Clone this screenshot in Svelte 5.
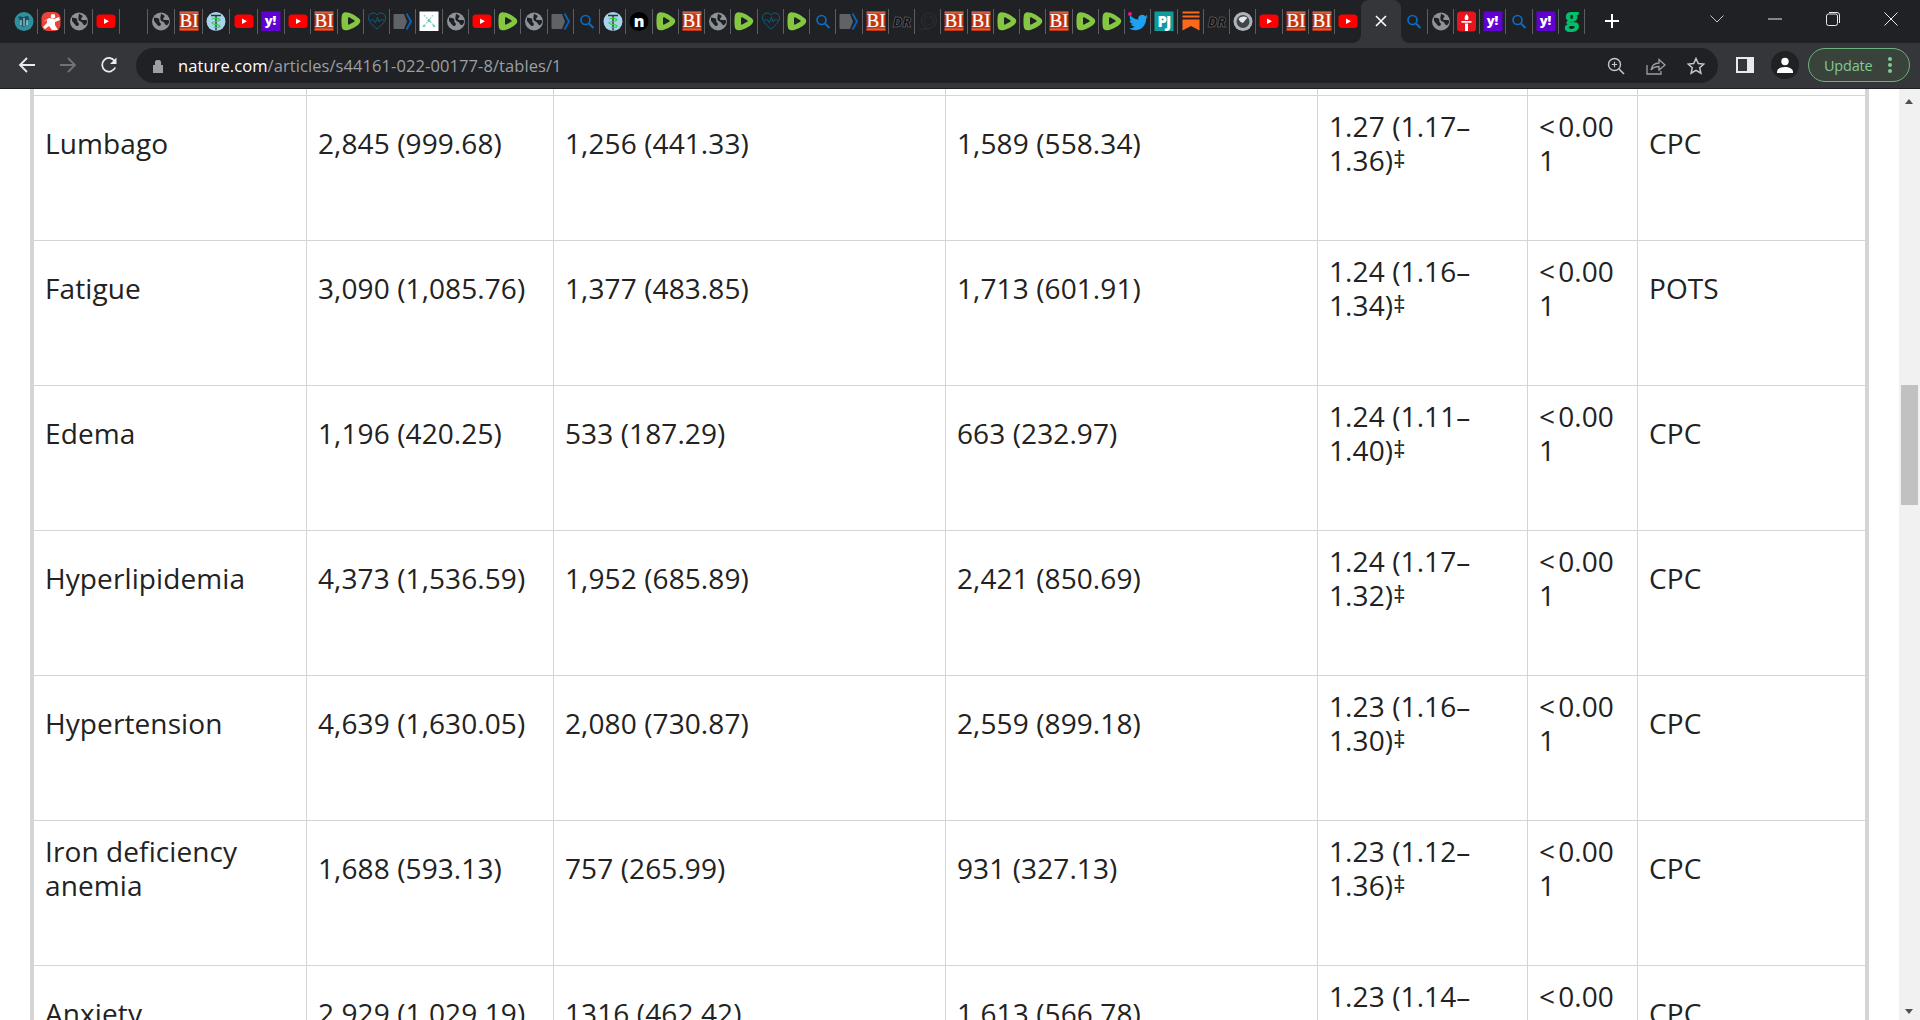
<script>
  // favicon strip, left to right; "x" is the active tab
  const tabs = [
    'earth', 'person', 'globe', 'yt', 'blank', 'globe', 'bi', 'cad', 'yt', 'yahoo',
    'yt', 'bi', 'rumble', 'heart', 'chev', 'mol', 'globe', 'yt', 'rumble', 'globe',
    'chev', 'search', 'cad', 'n', 'rumble', 'bi', 'globe', 'rumble', 'heart', 'rumble',
    'search', 'chev', 'bi', 'dr', 'coil', 'bi', 'bi', 'rumble', 'rumble', 'bi',
    'rumble', 'rumble', 'twitter', 'pj', 'sub', 'dr', 'silver', 'yt', 'bi', 'bi',
    'yt', 'x', 'search', 'globe', 'torch', 'yahoo', 'search', 'yahoo', 'g'
  ];

  const rows = [
    ['Lumbago', '2,845 (999.68)', '1,256 (441.33)', '1,589 (558.34)', '1.27 (1.17–1.36)', 'CPC'],
    ['Fatigue', '3,090 (1,085.76)', '1,377 (483.85)', '1,713 (601.91)', '1.24 (1.16–1.34)', 'POTS'],
    ['Edema', '1,196 (420.25)', '533 (187.29)', '663 (232.97)', '1.24 (1.11–1.40)', 'CPC'],
    ['Hyperlipidemia', '4,373 (1,536.59)', '1,952 (685.89)', '2,421 (850.69)', '1.24 (1.17–1.32)', 'CPC'],
    ['Hypertension', '4,639 (1,630.05)', '2,080 (730.87)', '2,559 (899.18)', '1.23 (1.16–1.30)', 'CPC'],
    ['Iron deficiency anemia', '1,688 (593.13)', '757 (265.99)', '931 (327.13)', '1.23 (1.12–1.36)', 'CPC'],
    ['Anxiety', '2,929 (1,029.19)', '1316 (462.42)', '1,613 (566.78)', '1.23 (1.14–1.33)', 'CPC']
  ];
</script>

{#snippet favicon(kind)}
  <svg class="fav" viewBox="0 0 20 20" width="20" height="20" aria-hidden="true">
    {#if kind === 'bi'}
      <rect x="0.5" width="19" height="20" fill="#c23510" />
      <rect x="0.5" y="1.600" width="19" height="0.600" fill="#e8a58f" />
      <rect x="0.5" y="17.800" width="19" height="0.600" fill="#e8a58f" />
      <text class="bi-txt" x="10" y="16" text-anchor="middle">BI</text>
    {:else if kind === 'yt'}
      <rect x="0.5" y="3.500" width="19" height="13.500" rx="3.500" fill="#f00" />
      <path d="M8 7.600l5 2.700-5 2.700z" fill="#fff" />
    {:else if kind === 'rumble'}
      <path d="M4.500 1.200C9 1.200 15 4.600 18 7.600c1.700 1.700 1.700 3.700 0 5.400-3 3-9 6.300-13.500 6.300C2.600 19.300 1 18 .8 16 .3 12.500.3 8 .8 4.500 1 2.500 2.600 1.200 4.500 1.200z" fill="#85c742" />
      <path d="M7 7c0-.6.6-1 1.200-.7l5 2.900c.6.300.6 1.200 0 1.500l-5 2.900c-.6.300-1.200-.1-1.200-.7z" fill="#202124" />
    {:else if kind === 'globe'}
      <circle cx="10" cy="10.500" r="9" fill="#8e9399" />
      <path d="M3 6.500c2 .5 4 .2 5 1.500s-.5 2.500 1 3.500 1 3-.5 3.500S5 12 3 10zM10 2.500c1 1.500 3 1 3.500 2.500s-2 2-1.500 3.200 4 .3 5.500 1 .5 3-1 4.500-2.500-1-3.500-2.200-3-1-3.500-3 .5-4.500.5-6z" fill="#202124" />
    {:else if kind === 'earth'}
      <circle cx="10" cy="10.500" r="9.500" fill="#2f8f9d" />
      <path d="M4 6c3-2 4 1 6 0s4-2 5 1-3 2-3 5-2 5-4 3-1-5-4-9z" fill="#1d4d60" />
      <path d="M7 9v5M10 7v8M13 9v5" stroke="#c9e6e6" stroke-width="1" />
    {:else if kind === 'person'}
      <rect x="0.500" y="1" width="19" height="19" rx="6" fill="#e8443a" />
      <path d="M12 3a2.300 2.300 0 1 1 0 4.600 2.300 2.300 0 0 1 0-4.600zM2 11l6-4 5 1 5-2 1 3-5 2v3l3 5H11l-3-4-4 3-2-2 4-4V9z" fill="#fff" />
    {:else if kind === 'cad'}
      <circle cx="10" cy="10.500" r="9.500" fill="#a9d3ee" />
      <path d="M5 4.500h10M10 4.500v15" stroke="#333" stroke-width="1.400" />
      <path d="M6 8c3-1.500 8-.5 8 1s-8 1-8 3 8 1 8 3-5 1.500-6 1" fill="none" stroke="#33d04a" stroke-width="1.200" />
    {:else if kind === 'yahoo'}
      <rect x="0.500" y="0.500" width="19" height="19.500" fill="#6001d2" />
      <text class="ya-txt" x="9.500" y="14.300" text-anchor="middle">y!</text>
    {:else if kind === 'heart'}
      <path d="M10 18C5 14 1.500 10.500 1.500 6.500 1.500 3.500 4 2 6 2c1.800 0 3.200.8 4 2 .8-1.200 2.200-2 4-2 2 0 4.500 1.500 4.500 4.500 0 4-3.500 7.500-8.500 11.500z" fill="none" stroke="#0f5f7c" stroke-width="1" />
      <path d="M3 9h4l1.500 3 2-6 1.500 5 1-2h4" fill="none" stroke="#0f5f7c" stroke-width="0.900" />
    {:else if kind === 'chev'}
      <path d="M1.500 3h9.500l3 7.500-3 7.500H1.500a1 1 0 0 1-1-1V4a1 1 0 0 1 1-1z" fill="#5f6368" />
      <path d="M13.500 2.500l4.500 8-4.500 8" fill="none" stroke="#0a5fb0" stroke-width="2" />
    {:else if kind === 'mol'}
      <rect x="0.500" y="0.500" width="19" height="19.500" fill="#fff" />
      <path d="M5 4l5 5 5 6M14 4l-4 5-5 6" fill="none" stroke="#9fdcd2" stroke-width="1.400" stroke-dasharray="2 1" />
      <circle cx="10" cy="9.500" r="1.500" fill="#5cc8b8" />
      <circle cx="5" cy="15" r="1.300" fill="#72d3c4" />
      <circle cx="15" cy="15" r="1.300" fill="#72d3c4" />
    {:else if kind === 'search'}
      <circle cx="8.500" cy="9" r="4.500" fill="none" stroke="#0a6cc4" stroke-width="1.700" />
      <path d="M12 12.500l4.500 4.500" stroke="#0a6cc4" stroke-width="2" />
    {:else if kind === 'n'}
      <circle cx="10" cy="10.500" r="9.500" fill="#000" />
      <text class="n-txt" x="10" y="15.500" text-anchor="middle">n</text>
    {:else if kind === 'dr'}
      <text class="dr-txt" x="10" y="15.500" text-anchor="middle">DR</text>
    {:else if kind === 'coil'}
      <circle cx="11" cy="9.500" r="7.500" fill="none" stroke="#2c2d30" stroke-width="1.200" />
      <circle cx="11" cy="9.500" r="4.500" fill="none" stroke="#2c2d30" stroke-width="1.200" />
      <path d="M1 18h10" stroke="#2c2d30" stroke-width="1.400" />
    {:else if kind === 'twitter'}
      <svg x="1" y="2" width="19" height="19" viewBox="0 0 24 24">
        <path d="M23.953 4.570a10 10 0 01-2.825.775 4.958 4.958 0 002.163-2.723c-.951.555-2.005.959-3.127 1.184a4.920 4.920 0 00-8.384 4.482C7.690 8.095 4.067 6.130 1.640 3.162a4.822 4.822 0 00-.666 2.475c0 1.710.870 3.213 2.188 4.096a4.904 4.904 0 01-2.228-.616v.060a4.923 4.923 0 003.946 4.827 4.996 4.996 0 01-2.212.085 4.936 4.936 0 004.604 3.417 9.867 9.867 0 01-6.102 2.105c-.390 0-.779-.023-1.170-.067a13.995 13.995 0 007.557 2.209c9.053 0 13.998-7.496 13.998-13.985 0-.210 0-.420-.015-.630A9.935 9.935 0 0024 4.590z" fill="#1da1f2" />
      </svg>
      <circle cx="2" cy="3" r="2" fill="#f0148c" />
    {:else if kind === 'pj'}
      <rect x="0.500" y="0.500" width="19" height="19.500" fill="#0e9d9b" />
      <text class="pj-txt" x="10" y="15.800" text-anchor="middle">PJ</text>
    {:else if kind === 'sub'}
      <path d="M1.500 0.500h17v2h-17zM1.500 4.500h17v2h-17zM1.500 8.500h17v11l-8.500-4.500-8.500 4.500z" fill="#ff681a" />
    {:else if kind === 'silver'}
      <circle cx="10" cy="10.500" r="9.500" fill="#aeb4ba" />
      <circle cx="10" cy="10.500" r="6.500" fill="#40454b" />
      <path d="M5.500 8c3-3 6-3 9-1-2 1-3 4-5 5-2-1-3-2-4-4z" fill="#e4e7ea" />
    {:else if kind === 'torch'}
      <rect x="0" y="0.500" width="19" height="20" rx="3.500" fill="#e8141e" />
      <path d="M9.500 3c2 2 2.500 3.500 1.500 6H8C7 6.500 8 5 9.500 3zM4.500 10h10v1.800h-10zM8 12.500h3V20H8z" fill="#fff" />
    {:else if kind === 'g'}
      <text class="g-txt" x="10" y="14.500" text-anchor="middle">g</text>
    {/if}
  </svg>
{/snippet}

<div class="window">
  <div class="tabstrip">
    {#each tabs as t, i}
      {#if t === 'x'}
        <div class="tab active">
          <svg viewBox="0 0 12 12" width="12" height="12" aria-hidden="true">
            <path d="M1 1l10 10M11 1L1 11" stroke="#fff" stroke-width="1.600" />
          </svg>
        </div>
      {:else}
        <div class="tab" class:wide={i < 10} class:nosep={tabs[i + 1] === 'x'}>
          {@render favicon(t)}
        </div>
      {/if}
    {/each}
    <svg class="plus" viewBox="0 0 16 16" width="16" height="16" aria-hidden="true">
      <path d="M8 1v14M1 8h14" stroke="#fff" stroke-width="2" />
    </svg>
    <div class="spacer"></div>
    <div class="winctl">
      <svg viewBox="0 0 14 8" width="14" height="8" aria-hidden="true"><path d="M.5.500L7 7 13.500.500" fill="none" stroke="#c4c7c5" stroke-width="1" /></svg>
      <svg viewBox="0 0 14 2" width="14" height="2" aria-hidden="true"><path d="M0 1h14" stroke="#e8eaed" stroke-width="1" /></svg>
      <svg viewBox="0 0 14 14" width="14" height="14" aria-hidden="true"><rect x="0.500" y="2" width="11" height="11.500" rx="2" fill="none" stroke="#e8eaed" /><path d="M3 .500h8a2.500 2.500 0 0 1 2.500 2.500v8" fill="none" stroke="#e8eaed" /></svg>
      <svg viewBox="0 0 14 14" width="14" height="14" aria-hidden="true"><path d="M.5.500l13 13M13.500.500l-13 13" stroke="#e8eaed" stroke-width="1" /></svg>
    </div>
  </div>

  <div class="toolbar">
    <svg class="nav" viewBox="0 0 18 18" width="18" height="18" aria-hidden="true"><path d="M17 9H2M9 2L2 9l7 7" fill="none" stroke="#e8eaed" stroke-width="1.800" /></svg>
    <svg class="nav" viewBox="0 0 18 18" width="18" height="18" aria-hidden="true"><path d="M1 9h15M9 2l7 7-7 7" fill="none" stroke="#6f7276" stroke-width="1.800" /></svg>
    <svg class="nav" viewBox="0 0 18 18" width="18" height="18" aria-hidden="true"><path d="M15.200 11.500A6.800 6.800 0 1 1 14.500 4.800" fill="none" stroke="#e8eaed" stroke-width="1.800" /><path d="M16.500 1.500v6.500H10z" fill="#e8eaed" /></svg>
    <div class="omnibox">
      <svg class="lock" viewBox="0 0 12 14" width="12" height="14" aria-hidden="true"><path d="M1 6h10v8H1zM3 6V4a3 3 0 0 1 6 0v2" fill="#9aa0a6" /><path d="M3.500 6V4a2.500 2.500 0 0 1 5 0v2" fill="none" stroke="#9aa0a6" stroke-width="1.200" /></svg>
      <span class="url"><b>nature.com</b>/articles/s44161-022-00177-8/tables/1</span>
      <div class="omni-icons">
        <svg viewBox="0 0 18 18" width="18" height="18" aria-hidden="true"><circle cx="7.500" cy="7.500" r="6" fill="none" stroke="#c4c7c5" stroke-width="1.400" /><path d="M12 12l5 5" stroke="#c4c7c5" stroke-width="1.600" /><path d="M4.800 7.500h5.400M7.500 4.800v5.400" stroke="#c4c7c5" stroke-width="1.200" /></svg>
        <svg viewBox="0 0 20 18" width="20" height="18" aria-hidden="true"><path d="M1 8v9h14v-3" fill="none" stroke="#9aa0a6" stroke-width="1.300" /><path d="M5 13c1-5 4-7 8-7V2.500l6 5.500-6 5V9.500c-3 0-6 1-8 3.500z" fill="none" stroke="#9aa0a6" stroke-width="1.300" /></svg>
        <svg viewBox="0 0 18 18" width="18" height="18" aria-hidden="true"><path d="M9 1.500l2.300 5 5.500.6-4.100 3.700 1.200 5.400L9 13.400l-4.900 2.800 1.200-5.400L1.200 7.100l5.500-.6z" fill="none" stroke="#c4c7c5" stroke-width="1.500" /></svg>
      </div>
    </div>
    <svg class="panel" viewBox="0 0 18 18" width="18" height="18" aria-hidden="true"><path d="M0 1h18v16H0zM2 3v12h9V3z" fill="#e8eaed" fill-rule="evenodd" /></svg>
    <div class="avatar">
      <svg viewBox="0 0 16 16" width="16" height="16" aria-hidden="true"><circle cx="8" cy="4.500" r="3.700" fill="#fff" /><path d="M0 15c0-3.500 4-5 8-5s8 1.500 8 5v1H0z" fill="#fff" /></svg>
    </div>
    <div class="update">
      <span>Update</span>
      <i class="dots"></i>
    </div>
  </div>

  <div class="viewport">
    <div class="page">
      <div class="tablewrap">
        <table>
          <colgroup>
            <col class="c1" /><col class="c2" /><col class="c3" /><col class="c4" /><col class="c5" /><col class="c6" /><col />
          </colgroup>
          <tbody>
            <tr class="stub"><td></td><td></td><td></td><td></td><td></td><td></td><td></td></tr>
            {#each rows as r}
              <tr>
                <td>{r[0]}</td>
                <td>{r[1]}</td>
                <td>{r[2]}</td>
                <td>{r[3]}</td>
                <td>{r[4]}<sup>‡</sup></td>
                <td><span class="lt">&lt;</span>0.001</td>
                <td>{r[5]}</td>
              </tr>
            {/each}
          </tbody>
        </table>
      </div>
    </div>
    <div class="scrollbar">
      <span class="arrow up"></span>
      <span class="thumb"></span>
      <span class="arrow down"></span>
    </div>
  </div>
</div>

<style>
  :global(body) {
    margin: 0;
    overflow: hidden;
  }

  .window {
    height: 1020px;
    display: flex;
    flex-direction: column;
    font-family: "Open Sans", "Noto Sans", sans-serif;
  }

  /* tab strip */
  .tabstrip {
    height: 43px;
    flex: none;
    background: #202124;
    display: flex;
    align-items: stretch;
    padding-left: 10px;
  }
  .tab {
    width: 26.25px;
    flex: none;
    display: flex;
    align-items: center;
    justify-content: center;
    padding-bottom: 2px;
    box-sizing: border-box;
    position: relative;
  }
  .tab.wide { width: 27.5px; }
  .tab::after {
    content: "";
    position: absolute;
    right: 0;
    top: 9px;
    height: 25px;
    width: 1px;
    background: #5a5d61;
  }
  .tab.nosep::after { display: none; }
  .tab.active {
    width: 40px;
    background: #35363a;
    border-radius: 8px 8px 0 0;
  }
  .tab.active::before,
  .tab.active::after {
    content: "";
    position: absolute;
    bottom: 0;
    top: auto;
    width: 8px;
    height: 8px;
  }
  .tab.active::before {
    left: -8px;
    background: radial-gradient(circle at 0 0, transparent 7.5px, #35363a 8px);
  }
  .tab.active::after {
    right: -8px;
    background: radial-gradient(circle at 100% 0, transparent 7.5px, #35363a 8px);
  }
  .fav { overflow: visible; }
  .bi-txt { font: 400 19px "Liberation Serif", serif; fill: #fff; stroke: #fff; stroke-width: 0.2px; }
  .ya-txt { font: 800 13px "Open Sans", sans-serif; fill: #fff; }
  .n-txt { font: 800 16px "Open Sans", sans-serif; fill: #fff; }
  .pj-txt { font: 800 15px "Open Sans", sans-serif; fill: #fff; letter-spacing: -1px; }
  .g-txt { font: 800 24px "Open Sans", sans-serif; fill: #00c06b; }
  .dr-txt { font: italic 800 14px "Open Sans", sans-serif; fill: #111; stroke: #7b7e82; stroke-width: 0.5px; }

  .plus { align-self: center; margin-left: 19px; margin-bottom: 1px; }
  .spacer { flex: 1; }
  .winctl {
    display: flex;
    align-items: center;
    align-self: flex-start;
    height: 38px;
    padding-right: 22px;
    gap: 44px;
  }

  /* toolbar */
  .toolbar {
    flex: none;
    background: #35363a;
    border-bottom: 1px solid #1f2023;
    display: flex;
    align-items: flex-start;
    height: 40px;
    padding: 5px 10px 0 18px;
  }
  .nav { margin-top: 8px; margin-right: 23px; }
  .nav:nth-of-type(3) { margin-right: 18px; }
  .omnibox {
    width: 1582px;
    height: 35px;
    background: #202124;
    border-radius: 18px;
    display: flex;
    align-items: center;
    padding-left: 16px;
    box-sizing: border-box;
  }
  .lock { margin-right: 14px; }
  .url {
    font-size: 16.5px;
    letter-spacing: 0.08px;
    color: #9aa0a6;
    white-space: nowrap;
    flex: 1;
  }
  .url b { font-weight: 400; color: #fff; }
  .omni-icons {
    display: flex;
    align-items: center;
    gap: 21px;
    padding-right: 13px;
  }
  .panel { margin: 8px 0 0 18px; }
  .avatar {
    width: 28px;
    height: 28px;
    border-radius: 50%;
    background: #202124;
    margin: 3px 0 0 17px;
    display: flex;
    align-items: center;
    justify-content: center;
  }
  .update {
    width: 102px;
    height: 34px;
    box-sizing: border-box;
    margin-left: 9px;
    border: 1px solid #6cb27c;
    border-radius: 17px;
    background: #3a423c;
    color: #81c995;
    font-size: 14.5px;
    letter-spacing: -0.2px;
    display: flex;
    align-items: center;
    padding-left: 15px;
    gap: 16px;
  }
  .dots {
    width: 4px;
    height: 4px;
    border-radius: 50%;
    background: #81c995;
    box-shadow: 0 -6px 0 #81c995, 0 6px 0 #81c995;
  }

  /* page */
  .viewport {
    flex: 1;
    min-height: 0;
    display: flex;
    background: #fff;
    overflow: hidden;
  }
  .page {
    flex: 1;
    min-width: 0;
    padding-left: 30px;
  }
  .tablewrap {
    width: 1831px;
    border-left: 4px solid #d5d5d5;
    border-right: 4px solid #d5d5d5;
    height: 100%;
    overflow: hidden;
  }
  table {
    width: 1831px;
    table-layout: fixed;
    border-collapse: separate;
    border-spacing: 0;
    color: #222;
    font-size: 28px;
    line-height: 34px;
    letter-spacing: 0.1px;
  }
  .c1 { width: 273px; }
  .c2 { width: 247px; }
  .c3 { width: 392px; }
  .c4 { width: 372px; }
  .c5 { width: 210px; }
  .c6 { width: 110px; }
  tr { height: 145px; }
  tr.stub { height: 7px; }
  td {
    padding: 12px 11px 62px;
    border-right: 1px solid #d5d5d5;
    border-bottom: 1px solid #d5d5d5;
    vertical-align: middle;
    overflow-wrap: anywhere;
  }
  tr.stub td { padding: 0; }
  td:last-child { border-right: none; }
  sup {
    font-size: 24px;
    line-height: 0;
    vertical-align: 3px;
  }
  .lt { margin-right: 3px; }

  /* scrollbar */
  .scrollbar {
    width: 21px;
    flex: none;
    background: #f1f1f1;
    position: relative;
  }
  .thumb {
    position: absolute;
    left: 2px;
    right: 2px;
    top: 296px;
    height: 120px;
    background: #c1c1c1;
  }
  .arrow {
    position: absolute;
    left: 6px;
    width: 0;
    height: 0;
    border-left: 4.500px solid transparent;
    border-right: 4.500px solid transparent;
  }
  .arrow.up { top: 10px; border-bottom: 5px solid #505050; }
  .arrow.down { bottom: 6px; border-top: 5px solid #505050; }
</style>
